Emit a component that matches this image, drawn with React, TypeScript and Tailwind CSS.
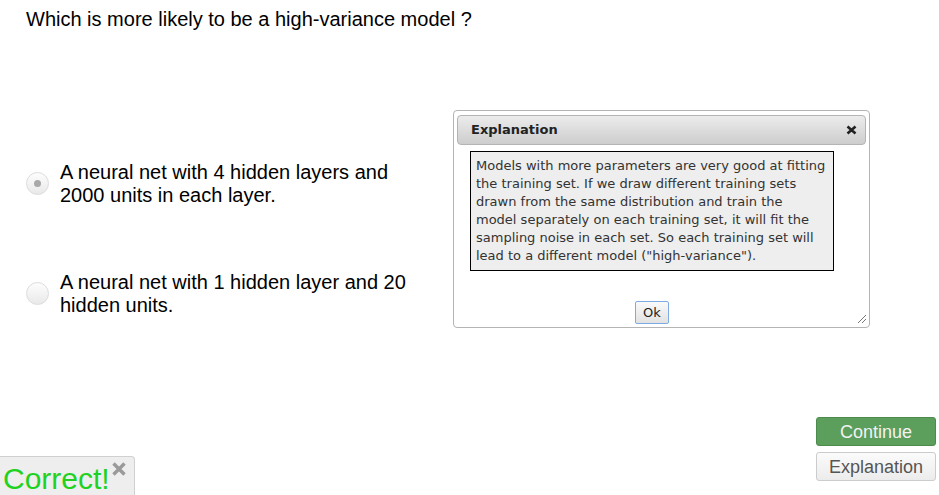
import React from "react";

const options = [
  { text: "A neural net with 4 hidden layers and 2000 units in each layer.", checked: true },
  { text: "A neural net with 1 hidden layer and 20 hidden units.", checked: false },
];

// the original box wraps at fixed points
const explanationLines = [
  "Models with more parameters are very good at fitting",
  "the training set. If we draw different training sets",
  "drawn from the same distribution and train the",
  "model separately on each training set, it will fit the",
  "sampling noise in each set. So each training set will",
  'lead to a different model ("high-variance").',
];

function Radio({ checked }: { checked: boolean }) {
  return (
    <span className="w-[23px] h-[23px] shrink-0 rounded-full border border-[#dcdcdc] bg-gradient-to-b from-[#fdfdfd] to-[#e9e9e9] flex items-center justify-center">
      {checked && <span className="w-[7px] h-[7px] rounded-full bg-[#a8a8a8]" />}
    </span>
  );
}

function ExplanationDialog() {
  return (
    <div className="absolute left-[453px] top-[110px] w-[417px] h-[218px] border border-[#b4b4b4] rounded-[4px] bg-white pt-[4px] px-[3px] flex flex-col font-['DejaVu_Sans',sans-serif] text-[13px] text-[#222]">
      {/* title bar */}
      <div className="h-[30px] shrink-0 flex items-center justify-between pl-[13px] pr-[8px] border border-[#b4b4b4] rounded-[4px] bg-gradient-to-b from-[#ececec] to-[#cdcdcd]">
        <span className="font-bold">Explanation</span>
        <svg width="11" height="10" viewBox="0 0 11 10">
          <path d="M1.5 1.5 L9.5 8.5 M9.5 1.5 L1.5 8.5" stroke="#222" strokeWidth="2.6" strokeLinecap="butt" />
        </svg>
      </div>

      <div className="mt-[6px] ml-[13px] w-[364px] border border-black bg-[#eeeeee] p-[5px] pr-[4px] leading-[18px] text-[#333] whitespace-nowrap">
        {explanationLines.map((l) => (
          <div key={l}>{l}</div>
        ))}
      </div>

      <div className="mt-[30px] w-[390px] flex justify-center">
        <button className="h-[23px] px-[7px] border border-[#7fabe4] rounded-[2px] bg-gradient-to-b from-[#fafafa] to-[#e2e2e2] text-[13px] leading-none text-[#222]">
          Ok
        </button>
      </div>

      <svg className="absolute right-[2px] bottom-[3px]" width="12" height="12" viewBox="0 0 12 12">
        <path d="M11 3 L3 11 M11 7 L7 11" stroke="#777" strokeWidth="1" />
      </svg>
    </div>
  );
}

export default function App() {
  return (
    <div className="relative w-[939px] h-[495px] overflow-hidden bg-white flex flex-col font-['Liberation_Sans',Arial,sans-serif] text-black">
      <h1 className="mt-[8px] ml-[26px] text-[20px] leading-[23px] font-normal">
        Which is more likely to be a high-variance model ?
      </h1>

      <div className="mt-[130px] flex flex-col gap-[64px]">
        {options.map((o) => (
          <label key={o.text} className="flex items-center ml-[26px]">
            <span className="-mt-[2px]">
              <Radio checked={o.checked} />
            </span>
            <span className="ml-[11px] w-[360px] text-[20px] leading-[23px]">{o.text}</span>
          </label>
        ))}
      </div>

      {/* footer */}
      <div className="mt-auto flex items-end justify-between">
        <div className="h-[39px] w-[135px] flex items-start border-t border-r border-[#d0d0d0] rounded-tr-[4px] bg-[#eeeeee] pt-[5px] pl-[3px]">
          <span className="text-[30px] leading-[34px] text-[#1fd21f]">Correct!</span>
          <svg className="ml-[1px] -mt-[1px]" width="16" height="16" viewBox="0 0 16 16">
            <path d="M2.5 2.5 L13.5 13.5 M13.5 2.5 L2.5 13.5" stroke="#9a9a9a" strokeWidth="3.4" />
          </svg>
        </div>

        <div className="flex flex-col gap-[6px] mr-[3px] mb-[14px]">
          <button className="w-[120px] h-[29px] rounded-[3px] border border-[#4d8b4d] bg-[#5c9e5c] text-[18px] leading-none text-[#f2f2f2]">
            Continue
          </button>
          <button className="w-[120px] h-[29px] rounded-[3px] border border-[#cccccc] bg-gradient-to-b from-[#fbfbfb] to-[#ececec] text-[18px] leading-none text-[#555]">
            Explanation
          </button>
        </div>
      </div>

      <ExplanationDialog />
    </div>
  );
}
